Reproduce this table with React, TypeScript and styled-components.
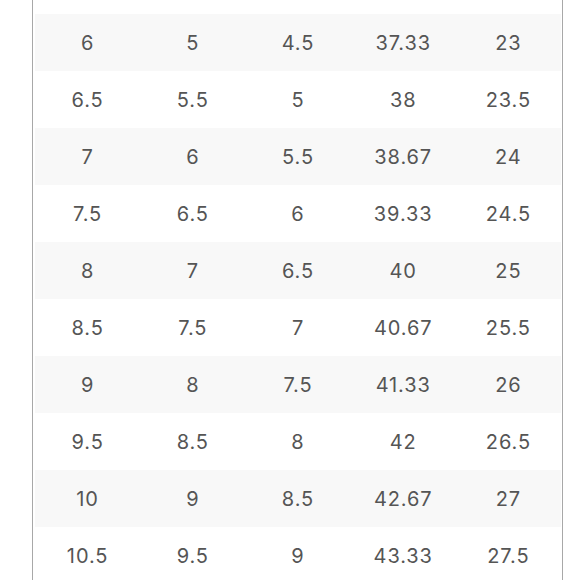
import React from "react";
import styled, { createGlobalStyle } from "styled-components";

const GlobalStyle = createGlobalStyle`
  html, body {
    margin: 0;
    padding: 0;
    background: #fff;
  }
  body {
    font-family: Inter, "Liberation Sans", sans-serif;
  }
`;

const Page = styled.div`
  height: 580px;
  overflow: hidden;
  padding-left: 32px;
  width: 531px;
`;

const Table = styled.div`
  height: 100%;
  border-left: 1px solid #a8a8a8;
  border-right: 1px solid #a8a8a8;
  padding: 14px 1px 0 2px;
  box-sizing: border-box;
`;

const Row = styled.div<{ $striped: boolean }>`
  display: grid;
  grid-template-columns: repeat(5, 1fr);
  height: 57px;
  align-items: center;
  background: ${(p) => (p.$striped ? "#f8f8f8" : "#fff")};
`;

const Cell = styled.div`
  text-align: center;
  font-size: 20px;
  letter-spacing: 0.9px;
  color: #555;
`;

const rows: string[][] = [
  ["6", "5", "4.5", "37.33", "23"],
  ["6.5", "5.5", "5", "38", "23.5"],
  ["7", "6", "5.5", "38.67", "24"],
  ["7.5", "6.5", "6", "39.33", "24.5"],
  ["8", "7", "6.5", "40", "25"],
  ["8.5", "7.5", "7", "40.67", "25.5"],
  ["9", "8", "7.5", "41.33", "26"],
  ["9.5", "8.5", "8", "42", "26.5"],
  ["10", "9", "8.5", "42.67", "27"],
  ["10.5", "9.5", "9", "43.33", "27.5"],
];

export default function App() {
  return (
    <>
      <GlobalStyle />
      <Page>
        <Table>
          {rows.map((row, i) => (
            <Row key={i} $striped={i % 2 === 0}>
              {row.map((value, j) => (
                <Cell key={j}>{value}</Cell>
              ))}
            </Row>
          ))}
        </Table>
      </Page>
    </>
  );
}
